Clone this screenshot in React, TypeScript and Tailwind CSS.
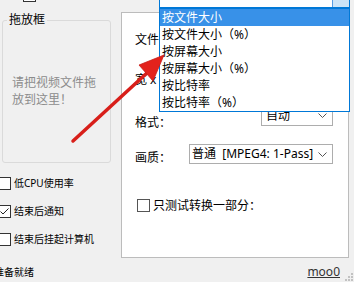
import React from "react";

const Box = ({ checked = false, className = "" }: { checked?: boolean; className?: string }) => (
  <span className={`flex h-[13px] w-[13px] shrink-0 items-center justify-center border border-[#333] bg-white ${className}`}>
    {checked && (
      <svg width="11" height="11" viewBox="0 0 11 11">
        <path d="M1.5 5.5 L4 8 L9.5 2.5" fill="none" stroke="#222" strokeWidth="1" />
      </svg>
    )}
  </span>
);

const Chevron = () => (
  <svg width="9" height="5" viewBox="0 0 9 5">
    <path d="M0.5 0.5 L4.5 4.5 L8.5 0.5" fill="none" stroke="#555" />
  </svg>
);

const items = ["按文件大小", "按文件大小（%）", "按屏幕大小", "按屏幕大小（%）", "按比特率", "按比特率（%）"];

export default function App() {
  return (
    <div className="relative flex h-[282px] w-[354px] flex-col overflow-hidden bg-[#f0f0f0] font-['Noto_Sans','Noto_Sans_CJK_SC',sans-serif] text-[12px] leading-[14px] text-black">
      {/* top strip, mostly cut off */}
      <div className="flex h-[8px] shrink-0">
        <div className="flex w-[120px] items-start">
          <Box className="ml-[23px] mt-[-11px]" />
          <span className="ml-[3px] mt-[-12px] font-bold">覆盖原文件</span>
        </div>
        <span className="mt-[-12px] w-[39px]">方式：</span>
        <div className="mt-[-14px] flex h-[22px] w-[191px] border border-[#0078d7] bg-white">
          <div className="flex-1" />
          <div className="w-[17px] border-l border-[#569de5] bg-[#cce4f7]" />
        </div>
      </div>

      {/* main area */}
      <div className="mt-[4px] flex shrink-0">
        <div className="flex w-[121px] flex-col pl-[2px]">
          <fieldset className="mt-[1px] h-[150px] w-[109px] rounded-[3px] border border-[#dadada]">
            <legend className="ml-[4px] px-[2px] leading-[14px]">拖放框</legend>
            <div className="mt-[47px] pl-[9px] leading-[17px] text-[#8c8c8c]">
              请把视频文件拖
              <br />
              放到这里！
            </div>
          </fieldset>
          <div className="mt-[13px] flex h-[14px] items-center text-[10px]">
            <Box className="ml-[-4px]" />
            <span className="ml-[3px]">低CPU使用率</span>
          </div>
          <div className="mt-[14px] flex h-[14px] items-center text-[10px]">
            <Box checked className="ml-[-4px]" />
            <span className="ml-[3px]">结束后通知</span>
          </div>
          <div className="mt-[14px] flex h-[14px] items-center text-[10px]">
            <Box className="ml-[-4px]" />
            <span className="ml-[3px]">结束后挂起计算机</span>
          </div>
        </div>

        <div className="flex h-[246px] w-[228px] flex-col border border-[#bcbcbc] bg-white">
          <div className="mt-[20px] h-[14px] pl-[13px]">文件</div>
          <div className="mt-[26px] h-[14px] pl-[13px]">宽 x</div>
          <div className="mt-[18px] flex items-start pl-[13px]">
            <span className="mt-[11px]">格式：</span>
            <div className="ml-auto mr-[15px] flex h-[21px] w-[72px] items-center justify-between border border-[#adadad] bg-white pl-[4px] pr-[5px]">
              <span>自动</span>
              <Chevron />
            </div>
          </div>
          <div className="mt-[14px] flex items-start pl-[13px]">
            <span className="mt-[7px]">画质：</span>
            <div className="ml-auto mr-[15px] flex h-[20px] w-[144px] items-center justify-between border border-[#adadad] bg-white pl-[2px] pr-[5px]">
              <span className="whitespace-pre">普通  [MPEG4: 1-Pass]</span>
              <Chevron />
            </div>
          </div>
          <div className="mt-[34px] flex h-[13px] items-center">
            <Box className="ml-[15px] border-[#555]" />
            <span className="ml-[3px]">只测试转换一部分：</span>
          </div>
        </div>
      </div>

      {/* status bar */}
      <div className="mt-[7px] flex h-[14px] shrink-0 items-center justify-between">
        <span className="ml-[-6px] text-[10px]">准备就绪</span>
        <span className="mr-[14px] text-[#333] underline">moo0</span>
      </div>

      {/* size grip */}
      <svg className="absolute bottom-0 right-0" width="10" height="10" viewBox="0 0 10 10">
        {[
          [7, 7],
          [7, 4],
          [7, 1],
          [4, 7],
          [4, 4],
          [1, 7],
        ].map(([x, y]) => (
          <rect key={`${x}-${y}`} x={x} y={y} width="2" height="2" fill="#c2c2c2" />
        ))}
      </svg>

      {/* open dropdown list */}
      <div className="absolute left-[159px] top-[8px] flex w-[191px] flex-col border border-[#0078d7] bg-white">
        {items.map((t, i) => (
          <div
            key={t}
            className={i === 0 ? "flex h-[17px] items-center bg-[#3891e8] pl-[2px] text-white" : "flex h-[17px] items-center pl-[2px]"}
          >
            {t}
          </div>
        ))}
      </div>

      {/* red annotation arrow */}
      <svg className="pointer-events-none absolute left-0 top-0" width="354" height="282">
        <line x1="73" y1="141" x2="148" y2="72" stroke="#d81f1a" strokeWidth="3.5" strokeLinecap="round" />
        <polygon points="164,55 139,65 153,81" fill="#e3221c" stroke="#c81c17" strokeWidth="0.8" strokeLinejoin="round" />
      </svg>
    </div>
  );
}
